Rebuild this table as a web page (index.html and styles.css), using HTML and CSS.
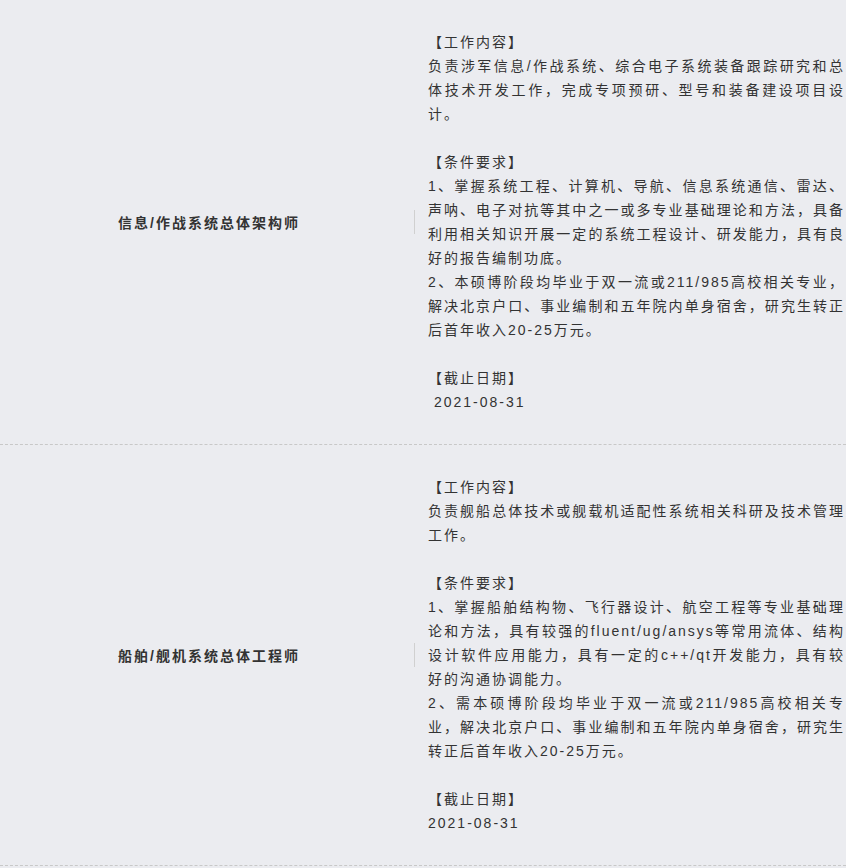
FILE: index.html
```html
<html lang="zh-CN">
<head>
    <meta charset="UTF-8">
    <title>岗位列表</title>
    <link rel="stylesheet" href="styles.css">
</head>
<body>
<div id="jobs">

    <div class="job">
        <div class="job-name">信息/作战系统总体架构师</div>
        <div class="divider"></div>
        <div class="job-desc">
            <div class="section">
                <p>【工作内容】</p>
                <p>负责涉军信息/作战系统、综合电子系统装备跟踪研究和总体技术开发工作，完成专项预研、型号和装备建设项目设计。</p>
            </div>
            <div class="section">
                <p>【条件要求】</p>
                <p>1、掌握系统工程、计算机、导航、信息系统通信、雷达、声呐、电子对抗等其中之一或多专业基础理论和方法，具备利用相关知识开展一定的系统工程设计、研发能力，具有良好的报告编制功底。</p>
                <p>2、本硕博阶段均毕业于双一流或211/985高校相关专业，解决北京户口、事业编制和五年院内单身宿舍，研究生转正后首年收入20-25万元。</p>
            </div>
            <div class="section">
                <p>【截止日期】</p>
                <p>&nbsp;2021-08-31</p>
            </div>
        </div>
    </div>

    <div class="job">
        <div class="job-name">船舶/舰机系统总体工程师</div>
        <div class="divider"></div>
        <div class="job-desc">
            <div class="section">
                <p>【工作内容】</p>
                <p>负责舰船总体技术或舰载机适配性系统相关科研及技术管理工作。</p>
            </div>
            <div class="section">
                <p>【条件要求】</p>
                <p>1、掌握船舶结构物、飞行器设计、航空工程等专业基础理论和方法，具有较强的fluent/ug/ansys等常用流体、结构设计软件应用能力，具有一定的c++/qt开发能力，具有较好的沟通协调能力。</p>
                <p>2、需本硕博阶段均毕业于双一流或211/985高校相关专业，解决北京户口、事业编制和五年院内单身宿舍，研究生转正后首年收入20-25万元。</p>
            </div>
            <div class="section">
                <p>【截止日期】</p>
                <p>2021-08-31</p>
            </div>
        </div>
    </div>

</div>
</body>
</html>
```

FILE: styles.css
```css
body {
    margin: 0;
    padding: 0;
    background-color: #ebecf0;
    color: #333;
    font-family: "Liberation Sans", "Noto Sans CJK SC", sans-serif;
    font-size: 14px;
}

.job {
    display: flex;
    border-bottom: 1px dashed #c8c8c8;
}

.job-name {
    width: 414px;
    flex-shrink: 0;
    display: flex;
    align-items: center;
    justify-content: center;
    padding-left: 4px;
    box-sizing: border-box;
    font-weight: bold;
    letter-spacing: 2px;
}

.divider {
    width: 1px;
    height: 24px;
    align-self: center;
    background-color: #d0d0d0;
}

.job-desc {
    width: 417px;
    padding: 30px 0 30px 13px;
    line-height: 24px;
    letter-spacing: 2px;
    text-align: justify;
}

.job-desc p {
    margin: 0;
}

.section {
    margin-bottom: 24px;
}

.section:last-child {
    margin-bottom: 0;
}
```
